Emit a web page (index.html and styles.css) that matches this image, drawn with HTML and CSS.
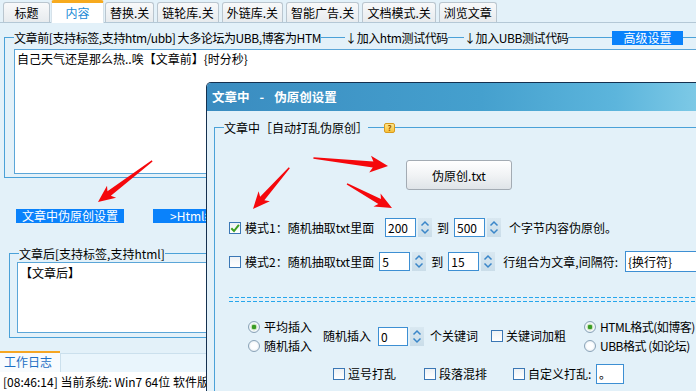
FILE: index.html
```html
<!DOCTYPE html>
<html lang="zh-CN">
<head>
  <meta charset="UTF-8">
  <title>文章内容设置</title>
  <link rel="stylesheet" href="styles.css">
</head>
<body>
  <div class="tabs">
    <span class="tab first">标题</span>
    <span class="tab active">内容</span>
    <span class="tab">替换.关</span>
    <span class="tab">链轮库.关</span>
    <span class="tab">外链库.关</span>
    <span class="tab">智能广告.关</span>
    <span class="tab">文档模式.关</span>
    <span class="tab">浏览文章</span>
  </div>

  <div class="group top-group">
    <div class="group-head">
      <span class="lead"></span>
      <span class="label">文章前[支持标签,支持htm/ubb] 大多论坛为UBB,博客为HTM</span>
      <span class="rule r1"></span>
      <span class="label">↓加入htm测试代码</span>
      <span class="rule r2"></span>
      <span class="label">↓加入UBB测试代码</span>
      <span class="rule fill"></span>
      <span class="blue-btn head-btn">高级设置</span>
      <span class="rule r4"></span>
    </div>
    <div class="group-body">
      <div class="textbox tall">自己天气还是那么热..唉【文章前】{时分秒}</div>
    </div>
  </div>

  <div class="btn-row">
    <span class="blue-btn">文章中伪原创设置</span>
    <span class="blue-btn html-btn">&gt;Html编辑器设置</span>
  </div>

  <div class="group bottom-group">
    <div class="group-head">
      <span class="lead"></span>
      <span class="label">文章后[支持标签,支持html]</span>
      <span class="rule fill"></span>
    </div>
    <div class="group-body">
      <div class="textbox short">【文章后】</div>
    </div>
  </div>

  <div class="log-strip">
    <span class="log-tab">工作日志</span>
    <span class="strip-rest"></span>
  </div>
  <div class="log">[08:46:14] 当前系统: Win7 64位 软件版本: 正式版 已就绪</div>

  <!-- 伪原创设置窗口 -->
  <div class="dialog">
    <div class="dialog-title">文章中<span class="dash">-</span>伪原创设置</div>
    <div class="dialog-body">
      <div class="group inner-group">
        <div class="group-head">
          <span class="lead"></span>
          <span class="label">文章中［自动打乱伪原创］</span>
          <span class="rule r2"></span>
          <span class="help">?</span>
          <span class="rule fill"></span>
        </div>
        <div class="group-body">
          <div class="txt-row">
            <button class="file-btn" type="button">伪原创.txt</button>
          </div>

          <div class="opt-row mode1">
            <span class="check"><svg width="10" height="10" viewBox="0 0 10 10"><path d="M1.3 5.2 L4 8 L8.9 1.8" fill="none" stroke="#3da022" stroke-width="2"/></svg></span>
            <span class="mode-label">模式1：随机抽取txt里面</span>
            <span class="num">200</span>
            <span class="spin"><svg width="14" height="19" viewBox="0 0 14 19"><path d="M3.5 7.5 L7 4 L10.5 7.5 M3.5 11.5 L7 15 L10.5 11.5" fill="none" stroke="#3a86c9" stroke-width="1.5"/></svg></span>
            <span class="to">到</span>
            <span class="num">500</span>
            <span class="spin"><svg width="14" height="19" viewBox="0 0 14 19"><path d="M3.5 7.5 L7 4 L10.5 7.5 M3.5 11.5 L7 15 L10.5 11.5" fill="none" stroke="#3a86c9" stroke-width="1.5"/></svg></span>
            <span class="after">个字节内容伪原创。</span>
          </div>

          <div class="opt-row mode2">
            <span class="check"></span>
            <span class="mode-label">模式2：随机抽取txt里面</span>
            <span class="num">5</span>
            <span class="spin"><svg width="14" height="19" viewBox="0 0 14 19"><path d="M3.5 7.5 L7 4 L10.5 7.5 M3.5 11.5 L7 15 L10.5 11.5" fill="none" stroke="#3a86c9" stroke-width="1.5"/></svg></span>
            <span class="to">到</span>
            <span class="num">15</span>
            <span class="spin"><svg width="14" height="19" viewBox="0 0 14 19"><path d="M3.5 7.5 L7 4 L10.5 7.5 M3.5 11.5 L7 15 L10.5 11.5" fill="none" stroke="#3a86c9" stroke-width="1.5"/></svg></span>
            <span class="after sep-label">行组合为文章,间隔符:</span>
            <span class="num sep">{换行符}</span>
          </div>

          <div class="dashes"></div>

          <div class="insert-row">
            <div class="radio-col">
              <div class="radio-line"><span class="radio on"></span>平均插入</div>
              <div class="radio-line"><span class="radio"></span>随机插入</div>
            </div>
            <span class="insert-label">随机插入</span>
            <span class="num key">0</span>
            <span class="spin"><svg width="14" height="19" viewBox="0 0 14 19"><path d="M3.5 7.5 L7 4 L10.5 7.5 M3.5 11.5 L7 15 L10.5 11.5" fill="none" stroke="#3a86c9" stroke-width="1.5"/></svg></span>
            <span class="key-label">个关键词</span>
            <span class="check bold-check"></span>
            <span class="check-text">关键词加粗</span>
            <div class="radio-col format-col">
              <div class="radio-line"><span class="radio on"></span>HTML格式(如博客)</div>
              <div class="radio-line"><span class="radio"></span>UBB格式 (如论坛)</div>
            </div>
          </div>

          <div class="opt-row shuffle-row">
            <span class="check"></span>
            <span class="check-text">逗号打乱</span>
            <span class="check gap"></span>
            <span class="check-text">段落混排</span>
            <span class="check gap2"></span>
            <span class="check-text cust-label">自定义打乱:</span>
            <span class="num cust">。</span>
          </div>
        </div>
      </div>
    </div>
  </div>

  <svg class="arrows" width="696" height="391" viewBox="0 0 696 391">
    <g fill="#f5080c">
      <polygon transform="translate(98 202) rotate(142.8)" points="-68,-0.7 -14,-2.8 -17,-7.5 0,0 -17,7.5 -14,2.8 -68,0.7"/>
      <polygon transform="translate(388 166) rotate(6.1)" points="-75,-0.8 -15,-3 -18,-8.5 0,0 -18,8.5 -15,3 -75,0.8"/>
      <polygon transform="translate(253 209) rotate(131.3)" points="-55,-0.7 -14,-2.8 -17,-7.5 0,0 -17,7.5 -14,2.8 -55,0.7"/>
      <polygon transform="translate(392 208) rotate(28.1)" points="-51,-0.7 -14,-2.8 -17,-7.5 0,0 -17,7.5 -14,2.8 -51,0.7"/>
    </g>
  </svg>
</body>
</html>
```

FILE: styles.css
```css
* {
  box-sizing: border-box;
}

html, body {
  margin: 0;
  height: 391px;
  overflow: hidden;
}

body {
  position: relative;
  width: 696px;
  background-color: #e3f1f9;
  font-family: "Noto Sans CJK SC", "Liberation Sans", sans-serif;
  font-size: 12px;
  line-height: 16px;
  color: #000;
}

/* top tabs */
.tabs {
  display: flex;
  align-items: flex-end;
  height: 23px;
  padding-left: 3px;
  border-bottom: 1px solid #b4c8d6;
}

.tab {
  height: 20px;
  min-width: 47px;
  padding: 0 4px;
  margin-right: 3px;
  border: 1px solid #bac6cf;
  border-bottom: none;
  border-radius: 3px 3px 0 0;
  background: linear-gradient(#f8f9fa, #e7ebee);
  line-height: 19px;
  text-align: center;
  white-space: nowrap;
}

.tab.first {
  margin-right: 1px;
}

.tab.active {
  height: 23px;
  min-width: 53px;
  margin-right: 1px;
  margin-bottom: -1px;
  border: 1px solid #d6e2ea;
  border-top: 3px solid #f7aa1e;
  border-bottom: none;
  background: #fff;
  color: #1c8ad6;
  line-height: 19px;
}

/* group boxes */
.group-head {
  display: flex;
  align-items: center;
  height: 15px;
  white-space: nowrap;
}

.group-head .lead {
  flex: none;
  width: 10px;
  height: 8px;
  align-self: flex-end;
  border-top: 1px solid #4aa1d8;
  border-left: 1px solid #4aa1d8;
}

.top-group .label {
  letter-spacing: -0.4px;
}

.rule {
  flex: none;
  height: 1px;
  background: #4aa1d8;
}

.rule.fill {
  flex: 1;
}

.r1 { width: 24px; }
.r2 { width: 16px; }
.r4 { width: 20px; }

.group-body {
  border: 1px solid #4aa1d8;
  border-top: none;
}

.top-group {
  width: 699px;
  margin: 7px 0 0 4px;
}

.top-group .group-body {
  padding: 4px 0 3px 9px;
}

.textbox {
  background: #fff;
  border: 1px solid #5ba6d8;
  padding: 1px 2px;
  white-space: nowrap;
}

.textbox.tall {
  height: 125px;
}

.textbox.short {
  height: 71px;
  padding-top: 2px;
}

.blue-btn {
  display: inline-block;
  height: 14px;
  padding: 0 6px;
  background: #0a82fb;
  color: #fff;
  line-height: 14px;
  letter-spacing: 0;
  white-space: nowrap;
}

.head-btn {
  flex: none;
  width: 71px;
  text-align: center;
}

.btn-row {
  display: flex;
  margin: 31px 0 0 16px;
  gap: 29px;
}

.html-btn {
  padding-left: 17px;
}

.bottom-group {
  width: 620px;
  margin: 23px 0 0 9px;
}

.bottom-group .group-body {
  padding: 1px 0 4px 7px;
}

/* work log */
.log-strip {
  display: flex;
  height: 21px;
  margin-top: 13px;
}

.log-tab {
  width: 60px;
  border-top: 2px solid #f5a623;
  background: #f7fbfe;
  color: #1d6fc4;
  padding-left: 4px;
  line-height: 18px;
}

.strip-rest {
  flex: 1;
  margin-top: 2px;
  background: #e9f5fc;
  border: 1px solid #cbe0ed;
  border-bottom: none;
}

.log {
  height: 19px;
  padding-left: 3px;
  background: #fff;
  line-height: 19px;
  white-space: nowrap;
}

/* dialog */
.dialog {
  position: absolute;
  left: 206px;
  top: 82px;
  width: 500px;
  height: 309px;
  border: 1px solid #14304f;
  border-bottom: none;
  border-radius: 5px 5px 0 0;
  background: #e3f1f9;
  overflow: hidden;
}

.dialog-title {
  height: 28px;
  padding-left: 5px;
  background: linear-gradient(90deg, #3a8cc0 0%, #45a0ce 55%, #5cb5dc 82%, #80cbe7 100%);
  color: #fff;
  font-size: 12.5px;
  font-weight: bold;
  line-height: 28px;
}

.dialog-title .dash {
  margin: 0 10px;
}

.inner-group {
  margin: 9px 0 0 7px;
}

.inner-group .group-body {
  height: 262px;
  padding-left: 14px;
  border-right: none;
  border-bottom: none;
}

.help {
  flex: none;
  width: 11px;
  height: 10px;
  border: 1px solid #d99a1c;
  border-radius: 2px;
  background: linear-gradient(#ffe68a, #f7c23c);
  color: #9a5a00;
  font-size: 8px;
  font-weight: bold;
  line-height: 8px;
  text-align: center;
}

.txt-row {
  padding-top: 25px;
}

.file-btn {
  display: block;
  width: 106px;
  height: 30px;
  margin-left: 177px;
  border: 1px solid #a3abb3;
  border-radius: 3px;
  background: linear-gradient(#ffffff, #f1f3f5 50%, #dfe4e8);
  font-family: inherit;
  font-size: 12px;
  color: #000;
}

.opt-row {
  display: flex;
  align-items: center;
  height: 19px;
  white-space: nowrap;
}

.mode1 {
  margin-top: 28px;
}

.mode2 {
  margin-top: 15px;
}

.check {
  flex: none;
  display: inline-flex;
  align-items: center;
  justify-content: center;
  width: 12px;
  height: 12px;
  border: 1px solid #3b77b5;
  background: linear-gradient(#eef2f5, #fff);
}

.mode-label {
  width: 140px;
  margin-left: 4px;
}

.num {
  flex: none;
  width: 31px;
  height: 19px;
  padding-left: 2px;
  border: 1px solid #3d8fd3;
  background: #fff;
  line-height: 17px;
}

.spin {
  flex: none;
  display: block;
  width: 14px;
  height: 19px;
  margin-left: 2px;
  background: linear-gradient(#d9e8f1, #cadde9);
}

.spin svg {
  display: block;
}

.to {
  margin: 0 5px;
}

.after {
  margin-left: 8px;
}

.sep-label {
  width: 118px;
}

.num.sep {
  width: 80px;
  height: 21px;
  margin-left: 7px;
  line-height: 19px;
}

.dashes {
  height: 5px;
  margin-top: 26px;
  background:
    repeating-linear-gradient(90deg, #26a6ec 0 4px, transparent 4px 6px) top / 100% 1px no-repeat,
    repeating-linear-gradient(90deg, #26a6ec 0 4px, transparent 4px 6px) bottom / 100% 1px no-repeat;
}

.insert-row {
  display: flex;
  align-items: center;
  margin-top: 15px;
  white-space: nowrap;
}

.radio-col {
  margin-left: 19px;
}

.radio-line {
  display: flex;
  align-items: center;
  height: 19px;
}

.radio {
  flex: none;
  width: 12px;
  height: 12px;
  margin-right: 4px;
  border: 1px solid #8aa3b8;
  border-radius: 50%;
  background: radial-gradient(circle, #fdfeff 0 3px, #dfe8ee 6px);
}

.radio.on {
  background: radial-gradient(circle, #3a9c24 0 2px, #cfe6c6 2.6px 3.2px, #f7fafc 3.8px, #dbe6ed 6px);
}

.insert-label {
  margin-left: 11px;
}

.num.key {
  width: 30px;
  margin-left: 7px;
}

.key-label {
  margin-left: 6px;
}

.bold-check {
  margin-left: 13px;
}

.check-text {
  margin-left: 3px;
}

.format-col {
  margin-left: 18px;
  letter-spacing: -0.5px;
}

.shuffle-row {
  height: 20px;
  margin-top: 9px;
  padding-left: 104px;
}

.check.gap {
  margin-left: 28px;
}

.check.gap2 {
  margin-left: 26px;
}

.cust-label {
  width: 66px;
}

.num.cust {
  width: 28px;
  height: 20px;
  margin-left: 2px;
}

/* red hint arrows over everything */
.arrows {
  position: absolute;
  left: 0;
  top: 0;
  pointer-events: none;
}
```
